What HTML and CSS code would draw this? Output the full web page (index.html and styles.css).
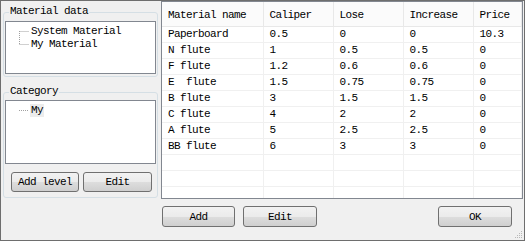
FILE: index.html
```html
<!DOCTYPE html>
<html>
  <head>
    <title>Material data</title>
    <meta charset="UTF-8">
    <link rel="stylesheet" href="styles.css">
  </head>
  <body>
    <div class="window">
      <div class="side">
        <div class="group group-material">
          <span class="group-label">Material data</span>
          <div class="tree tree-material">
            <svg class="tree-lines" width="11" height="26">
              <path d="M0.5 6.5 H10 M0.5 19.5 H10 M0.5 6 V20" stroke="#a0a0a0" stroke-dasharray="1 1" fill="none"/>
            </svg>
            <ul class="tree-items">
              <li>System Material</li>
              <li>My Material</li>
            </ul>
          </div>
        </div>

        <div class="group group-category">
          <span class="group-label">Category</span>
          <div class="tree tree-category">
            <svg class="tree-lines" width="11" height="13">
              <path d="M0 6.5 H10" stroke="#a0a0a0" stroke-dasharray="1 1" fill="none"/>
            </svg>
            <ul class="tree-items">
              <li class="selected">My</li>
            </ul>
          </div>
          <div class="button-row">
            <button class="btn btn-level">Add level</button>
            <button class="btn btn-edit-cat">Edit</button>
          </div>
        </div>
      </div>

      <div class="main">
        <div class="grid">
          <table>
            <thead>
              <tr>
                <th class="c-name">Material name</th>
                <th class="c-num">Caliper</th>
                <th class="c-num">Lose</th>
                <th class="c-num">Increase</th>
                <th class="c-price">Price</th>
              </tr>
            </thead>
            <tbody>
              <tr><td>Paperboard</td><td>0.5</td><td>0</td><td>0</td><td>10.3</td></tr>
              <tr><td>N flute</td><td>1</td><td>0.5</td><td>0.5</td><td>0</td></tr>
              <tr><td>F flute</td><td>1.2</td><td>0.6</td><td>0.6</td><td>0</td></tr>
              <tr><td>E&nbsp;&nbsp;flute</td><td>1.5</td><td>0.75</td><td>0.75</td><td>0</td></tr>
              <tr><td>B flute</td><td>3</td><td>1.5</td><td>1.5</td><td>0</td></tr>
              <tr><td>C flute</td><td>4</td><td>2</td><td>2</td><td>0</td></tr>
              <tr><td>A flute</td><td>5</td><td>2.5</td><td>2.5</td><td>0</td></tr>
              <tr><td>BB flute</td><td>6</td><td>3</td><td>3</td><td>0</td></tr>
              <tr><td></td><td></td><td></td><td></td><td></td></tr>
              <tr><td></td><td></td><td></td><td></td><td></td></tr>
              <tr><td></td><td></td><td></td><td></td><td></td></tr>
            </tbody>
          </table>
        </div>
        <div class="bottom-row">
          <button class="btn btn-add">Add</button>
          <button class="btn btn-edit">Edit</button>
          <button class="btn btn-ok">OK</button>
        </div>
      </div>

      <svg class="grip" width="9" height="9">
        <g fill="#b8b8b8">
          <rect x="7" y="1" width="1" height="1"/>
          <rect x="5" y="3" width="1" height="1"/>
          <rect x="7" y="3" width="1" height="1"/>
          <rect x="3" y="5" width="1" height="1"/>
          <rect x="5" y="5" width="1" height="1"/>
          <rect x="7" y="5" width="1" height="1"/>
          <rect x="1" y="7" width="1" height="1"/>
          <rect x="3" y="7" width="1" height="1"/>
          <rect x="5" y="7" width="1" height="1"/>
          <rect x="7" y="7" width="1" height="1"/>
        </g>
      </svg>
    </div>
  </body>
</html>
```

FILE: styles.css
```css
body {
  margin: 0;
  background-color: white;
  font-family: "Liberation Mono", "DejaVu Sans Mono", monospace;
  font-size: 11px;
  letter-spacing: -0.6px;
  color: black;
}

.window {
  position: relative;
  width: 525px;
  height: 241px;
  box-sizing: border-box;
  border: 1px solid #6e6e6e;
  background-color: #f0f0f0;
  display: flex;
}

.side {
  width: 155px;
  padding: 11px 0 0 2px;
  display: flex;
  flex-direction: column;
}

.group {
  position: relative;
  width: 155px;
  box-sizing: border-box;
  border: 1px solid #d5dfe5;
  border-radius: 3px;
  padding: 8px 1px 2px 1px;
}

.group-category {
  margin-top: 15px;
  padding: 7px 1px 5px 1px;
}

.group-label {
  position: absolute;
  top: -8px;
  left: 5px;
  padding: 0 1px;
  line-height: 13px;
  background-color: #f0f0f0;
}

.tree {
  box-sizing: border-box;
  border: 1px solid #828790;
  background-color: white;
  display: flex;
  align-items: flex-start;
  padding: 3px 0 0 13px;
}

.tree-material {
  height: 53px;
}

.tree-category {
  height: 64px;
}

.tree-items {
  list-style: none;
  margin: 0;
  padding: 0;
}

.tree-items li {
  height: 13px;
  line-height: 13px;
  padding: 0 1px;
}

.tree-items li.selected {
  background-color: #ececec;
}

.button-row {
  display: flex;
  gap: 4px;
  margin-top: 8px;
  padding-left: 6px;
}

.btn {
  font-family: inherit;
  font-size: 11px;
  letter-spacing: -0.6px;
  color: black;
  height: 20px;
  padding: 0;
  box-sizing: border-box;
  border: 1px solid #707070;
  border-radius: 3px;
  background: linear-gradient(#f2f2f2 0%, #ebebeb 50%, #dddddd 51%, #cfcfcf 100%);
}

.btn-level {
  width: 68px;
}

.btn-edit-cat {
  width: 69px;
}

.main {
  width: 362px;
  margin-left: 3px;
  display: flex;
  flex-direction: column;
}

.grid {
  height: 198px;
  box-sizing: border-box;
  border: 1px solid #828790;
  background-color: white;
  overflow: hidden;
}

table {
  width: 360px;
  border-collapse: collapse;
  table-layout: fixed;
}

th, td {
  text-align: left;
  font-weight: normal;
  padding: 0 0 0 6px;
  white-space: nowrap;
  overflow: hidden;
}

th {
  height: 24px;
  box-sizing: border-box;
  padding-top: 2px;
  background-color: #fbfbfb;
  border-right: 1px solid #e8e8e8;
  border-bottom: 1px solid #e8e8e8;
}

td {
  height: 16px;
  box-sizing: border-box;
  line-height: 15px;
  border-right: 1px solid #f0f0f0;
  border-bottom: 1px solid #f0f0f0;
}

.c-name {
  width: 101px;
}

.c-num {
  width: 70px;
}

.bottom-row {
  display: flex;
  margin-top: 7px;
  padding-left: 1px;
  padding-right: 11px;
}

.bottom-row .btn {
  height: 21px;
}

.btn-add {
  width: 73px;
}

.btn-edit {
  width: 74px;
  margin-left: 8px;
}

.btn-ok {
  width: 74px;
  margin-left: auto;
}

.grip {
  position: absolute;
  right: 1px;
  bottom: 1px;
}
```
